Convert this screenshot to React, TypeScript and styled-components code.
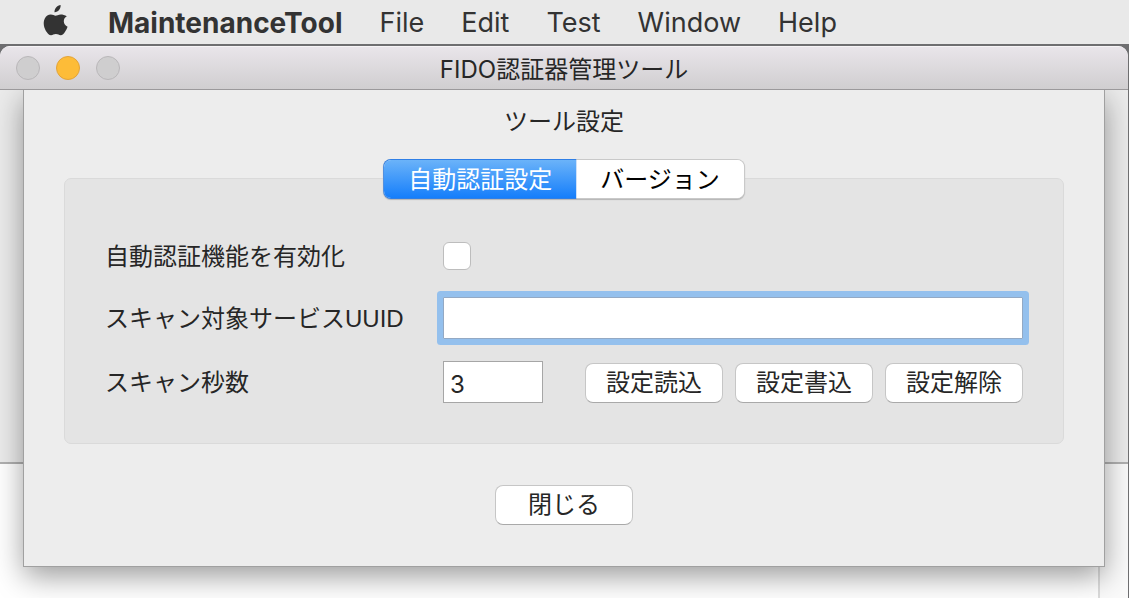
import React from "react";
import styled, { createGlobalStyle } from "styled-components";

const GlobalStyle = createGlobalStyle`
  *, *::before, *::after { box-sizing: border-box; }
  body {
    margin: 0;
    background: #6e6e70;
    color: #262626;
    font-family: "Liberation Sans", "Noto Sans CJK JP", sans-serif;
    font-size: 24px;
    line-height: 32px;
  }
  button, input { font: inherit; color: inherit; margin: 0; }
`;

const Screen = styled.div`
  display: flex;
  flex-direction: column;
  min-height: 100vh;
`;

const MenuBar = styled.nav`
  display: flex;
  align-items: center;
  gap: 37px;
  height: 44px;
  padding: 0 42px;
  background: #e9e9e9;
  color: #333;
  font-family: Inter, sans-serif;
  font-size: 27px;
`;

const AppleLogo = styled.svg`
  width: 26px;
  height: 32px;
  margin-right: 3px;
  flex: none;
  margin-bottom: 3px;
`;

const MenuItem = styled.button<{ $app?: boolean }>`
  padding: 2px 0 0;
  border: 0;
  background: none;
  font-size: ${(p) => (p.$app ? "28px" : "27px")};
  font-weight: ${(p) => (p.$app ? 700 : 400)};
`;

const Window = styled.main`
  display: flex;
  flex: 1;
  flex-direction: column;
  margin: 2px 1px 0 0;
  border-radius: 10px 10px 0 0;
  background: #fff;
  overflow: hidden;
`;

const TitleBar = styled.header`
  display: grid;
  grid-template-columns: 1fr auto 1fr;
  align-items: center;
  height: 44px;
  padding: 0 16px;
  border-top: 1px solid #f6f4f6;
  border-bottom: 1px solid #9b999b;
  background: linear-gradient(#e9e5ea, #d0ced0);
`;

const TrafficLights = styled.div`
  display: flex;
  gap: 16px;
`;

const Light = styled.button<{ $on?: boolean }>`
  width: 24px;
  height: 24px;
  padding: 0;
  border: 1px solid ${(p) => (p.$on ? "#e2a33a" : "#b9b7b9")};
  border-radius: 50%;
  background: ${(p) => (p.$on ? "#fdbc38" : "#cfcecf")};
`;

const WindowTitle = styled.h1`
  margin: 0;
  padding-top: 3px;
  font-family: Inter, "Noto Sans CJK JP", sans-serif;
  font-size: 24px;
  font-weight: 400;
`;

const WindowBody = styled.div`
  position: relative;
  display: flex;
  flex: 1;
  flex-direction: column;
  overflow: hidden;
`;

const UpperPane = styled.div`
  height: 374px;
  border-bottom: 2px solid #b0b0b0;
  background: #ebebeb;
`;

const LogPane = styled.div`
  flex: 1;
  min-height: 134px;
  padding-right: 28px;
  background: #fafafa;
`;

const LogArea = styled.div`
  height: 100%;
  min-height: 134px;
  border-right: 2px solid #dcdcdc;
  background: #fff;
`;

const Sheet = styled.section`
  position: absolute;
  top: 0;
  left: 24px;
  right: 24px;
  display: flex;
  flex-direction: column;
  align-items: center;
  padding: 16px 40px 41px;
  background: #ededed;
  box-shadow: 0 0 0 1px #a0a0a0, 0 10px 28px rgba(0, 0, 0, 0.4);
`;

const SheetTitle = styled.h2`
  margin: 0 0 22px;
  font-size: 24px;
  font-weight: 400;
`;

const Segments = styled.div`
  display: flex;
  z-index: 1;
  height: 38px;
  margin-bottom: -20px;
  border-radius: 7px;
  background: #fff;
  box-shadow: 0 0 0 1px #c9c9c9, 0 1px 1px 1px #b4b4b4;
`;

const Segment = styled.button<{ $selected?: boolean }>`
  padding: 2px 24px 0;
  border: 0;
  border-radius: ${(p) => (p.$selected ? "7px 0 0 7px" : "0 7px 7px 0")};
  background: ${(p) => (p.$selected ? "linear-gradient(#6bb3f9, #157efb)" : "#fff")};
  box-shadow: ${(p) => (p.$selected ? "0 0 0 1px #2f7fe6" : "none")};
  clip-path: ${(p) => (p.$selected ? "inset(-1px 0 -1px -1px)" : "none")};
  color: ${(p) => (p.$selected ? "#fff" : "#000")};
`;

const GroupBox = styled.form`
  display: grid;
  grid-template-columns: 338px 1fr;
  grid-template-rows: 38px 42px 42px;
  row-gap: 22px;
  align-items: center;
  align-self: stretch;
  padding: 58px 40px 40px;
  border: 1px solid #dadada;
  border-radius: 7px;
  background: #e4e4e4;
`;

const FieldLabel = styled.label`
  padding-top: 1px;
`;

const CheckBox = styled.input`
  appearance: none;
  display: block;
  width: 28px;
  height: 28px;
  border: 1px solid #bdbdbd;
  border-radius: 6px;
  background: #fff;
`;

const TextField = styled.input<{ $focused?: boolean }>`
  width: ${(p) => (p.$focused ? "100%" : "100px")};
  height: 42px;
  padding: 4px 6px 0;
  border: 1px solid ${(p) => (p.$focused ? "#93a9c4" : "#a6a6a6")};
  background: #fff;
  font-family: Inter, sans-serif;
  outline: none;
  ${(p) => p.$focused && "box-shadow: 0 0 0 6px #94c0ed; border-radius: 1px;"}
`;

const FieldRow = styled.div`
  display: flex;
  align-items: flex-end;
  justify-content: space-between;
`;

const Actions = styled.div`
  display: flex;
  gap: 12px;
`;

const PushButton = styled.button`
  width: 138px;
  height: 40px;
  padding: 0;
  border: 1px solid #c6c6c6;
  border-bottom-color: #a9a9a9;
  border-radius: 8px;
  background: #fff;
`;

const SheetFooter = styled.footer`
  margin-top: 41px;
`;

export default function App() {
  return (
    <>
      <GlobalStyle />
      <Screen>
        <MenuBar>
          <AppleLogo viewBox="0 0 26 32" aria-hidden="true">
            <path
              fill="#333"
              d="M18.600 0c.2 1.900-.5 3.700-1.600 5.100-1.100 1.400-2.800 2.300-4.500 2.200-.2-1.800.6-3.600 1.600-4.800C15.200 1.200 17.100.2 18.600 0ZM24.800 11.300c-1.900 1.100-3 2.800-3 5 0 2.500 1.500 4.600 3.800 5.500-.6 1.800-1.600 3.600-2.700 5.200-1.100 1.600-2.300 3.200-4.200 3.200-1.800 0-2.500-1.100-4.800-1.100-2.200 0-3 1.100-4.800 1.100-1.900.1-3.200-1.700-4.400-3.300C2.300 23.600.5 17.800 2.800 13.400c1.200-2.300 3.500-3.800 6-3.800 1.900 0 3.600 1.200 4.800 1.200 1.100 0 3.200-1.500 5.600-1.300 1 0 3.900.4 5.600 1.800Z"
            />
          </AppleLogo>
          <MenuItem $app>MaintenanceTool</MenuItem>
          <MenuItem>File</MenuItem>
          <MenuItem>Edit</MenuItem>
          <MenuItem>Test</MenuItem>
          <MenuItem>Window</MenuItem>
          <MenuItem>Help</MenuItem>
        </MenuBar>
        <Window>
          <TitleBar>
            <TrafficLights>
              <Light aria-label="Close" />
              <Light $on aria-label="Minimize" />
              <Light aria-label="Zoom" />
            </TrafficLights>
            <WindowTitle>FIDO認証器管理ツール</WindowTitle>
          </TitleBar>
          <WindowBody>
            <UpperPane />
            <LogPane>
              <LogArea />
            </LogPane>
            <Sheet role="dialog" aria-labelledby="sheet-title">
              <SheetTitle id="sheet-title">ツール設定</SheetTitle>
              <Segments role="tablist">
                <Segment $selected role="tab" aria-selected="true">自動認証設定</Segment>
                <Segment role="tab" aria-selected="false">バージョン</Segment>
              </Segments>
              <GroupBox>
                <FieldLabel htmlFor="auto-auth">自動認証機能を有効化</FieldLabel>
                <CheckBox id="auto-auth" type="checkbox" />
                <FieldLabel htmlFor="service-uuid">スキャン対象サービスUUID</FieldLabel>
                <TextField $focused id="service-uuid" type="text" />
                <FieldLabel htmlFor="scan-seconds">スキャン秒数</FieldLabel>
                <FieldRow>
                  <TextField id="scan-seconds" type="text" defaultValue="3" />
                  <Actions>
                    <PushButton type="button">設定読込</PushButton>
                    <PushButton type="button">設定書込</PushButton>
                    <PushButton type="button">設定解除</PushButton>
                  </Actions>
                </FieldRow>
              </GroupBox>
              <SheetFooter>
                <PushButton type="button">閉じる</PushButton>
              </SheetFooter>
            </Sheet>
          </WindowBody>
        </Window>
      </Screen>
    </>
  );
}
